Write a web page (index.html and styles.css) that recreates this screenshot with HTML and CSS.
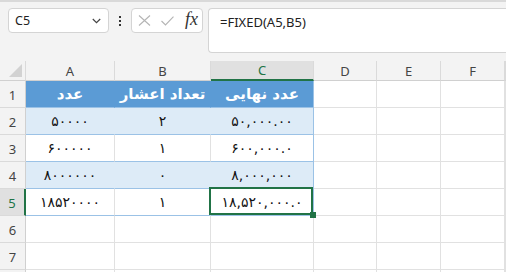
FILE: index.html
```html
<!DOCTYPE html>
<html lang="fa">
<head>
    <meta charset="UTF-8">
    <title>FIXED</title>
    <link rel="stylesheet" href="styles.css">
</head>
<body>
    <div class="topline"></div>
    <div class="toolbar">
        <div class="namebox">
            <span>C5</span>
            <svg class="chevron" width="9" height="6" viewBox="0 0 9 6"><path d="M0.8 1 L4.5 4.7 L8.2 1" fill="none" stroke="#444" stroke-width="1.2"/></svg>
        </div>
        <div class="dots"><i></i><i></i><i></i></div>
        <div class="fxbox">
            <svg width="13" height="11" viewBox="0 0 13 11"><path d="M1 0.5 L12 10.5 M12 0.5 L1 10.5" stroke="#b4b4b4" stroke-width="1.1" fill="none"/></svg>
            <svg width="13" height="10" viewBox="0 0 13 10"><path d="M0.5 5 L4.5 9 L12.5 0.7" stroke="#b4b4b4" stroke-width="1.1" fill="none"/></svg>
            <span class="fx">fx</span>
        </div>
        <div class="formula">=FIXED(A5,B5)</div>
    </div>

    <div class="gap"></div>

    <div class="sheet">
        <!-- column headers -->
        <div class="hd corner"><svg width="13" height="13" viewBox="0 0 13 13"><path d="M13 0 L13 13 L0 13 Z" fill="#d2d2d2"/></svg></div>
        <div class="hd">A</div>
        <div class="hd">B</div>
        <div class="hd sel-col">C</div>
        <div class="hd">D</div>
        <div class="hd">E</div>
        <div class="hd">F</div>
        <div class="hd"></div>

        <!-- row 1 -->
        <div class="rh">1</div>
        <div class="c th">عدد</div>
        <div class="c th">تعداد اعشار</div>
        <div class="c th last">عدد نهایی</div>
        <div class="c"></div><div class="c"></div><div class="c"></div><div class="c"></div>

        <!-- row 2 -->
        <div class="rh">2</div>
        <div class="c band">۵۰۰۰۰</div>
        <div class="c band">۲</div>
        <div class="c band last">۵۰,۰۰۰.۰۰</div>
        <div class="c"></div><div class="c"></div><div class="c"></div><div class="c"></div>

        <!-- row 3 -->
        <div class="rh">3</div>
        <div class="c plain">۶۰۰۰۰۰</div>
        <div class="c plain">۱</div>
        <div class="c plain last">۶۰۰,۰۰۰.۰</div>
        <div class="c"></div><div class="c"></div><div class="c"></div><div class="c"></div>

        <!-- row 4 -->
        <div class="rh">4</div>
        <div class="c band">۸۰۰۰۰۰۰</div>
        <div class="c band">۰</div>
        <div class="c band last">۸,۰۰۰,۰۰۰</div>
        <div class="c"></div><div class="c"></div><div class="c"></div><div class="c"></div>

        <!-- row 5 -->
        <div class="rh sel-row">5</div>
        <div class="c plain">۱۸۵۲۰۰۰۰</div>
        <div class="c plain">۱</div>
        <div class="c plain last active">۱۸,۵۲۰,۰۰۰.۰</div>
        <div class="c"></div><div class="c"></div><div class="c"></div><div class="c"></div>

        <!-- rows 6-8 -->
        <div class="rh">6</div>
        <div class="c"></div><div class="c"></div><div class="c"></div><div class="c"></div><div class="c"></div><div class="c"></div><div class="c"></div>
        <div class="rh">7</div>
        <div class="c"></div><div class="c"></div><div class="c"></div><div class="c"></div><div class="c"></div><div class="c"></div><div class="c"></div>
        <div class="rh"></div>
        <div class="c"></div><div class="c"></div><div class="c"></div><div class="c"></div><div class="c"></div><div class="c"></div><div class="c"></div>
    </div>
</body>
</html>
```

FILE: styles.css
```css
body {
    margin: 0;
    background-color: #f3f3f3;
    font-family: "Noto Sans", "Open Sans", sans-serif;
    overflow: hidden;
    width: 506px;
    height: 272px;
}

.topline {
    height: 2px;
    background-color: #d9d9d9;
}

.toolbar {
    display: flex;
    align-items: flex-start;
    padding: 6px 0 0 8px;
    height: 45px;
}

.namebox,
.fxbox,
.formula {
    box-sizing: border-box;
    background-color: white;
    border: 1px solid #d4d4d4;
    border-radius: 4px;
}

.namebox {
    display: flex;
    align-items: center;
    justify-content: space-between;
    width: 101px;
    height: 25px;
    padding: 0 7px 0 6px;
    font-size: 12.5px;
    color: #222;
}

.dots {
    width: 22px;
    height: 25px;
    display: flex;
    flex-direction: column;
    align-items: center;
    justify-content: center;
    gap: 2px;
}

.dots i {
    display: block;
    width: 2px;
    height: 2px;
    background-color: #333;
}

.fxbox {
    display: flex;
    align-items: center;
    width: 72px;
    height: 25px;
    padding-left: 6px;
    gap: 10px;
}

.fx {
    font-family: "Liberation Serif", serif;
    font-style: italic;
    font-size: 18px;
    color: #333;
    margin-left: 1px;
    margin-top: -2px;
}

.formula {
    flex: 1;
    height: 45px;
    margin-left: 5px;
    border-right: none;
    border-radius: 4px 0 0 4px;
    padding: 4px 0 0 11px;
    font-size: 13px;
    color: #222;
}

.gap {
    height: 8px;
}

.sheet {
    display: grid;
    grid-template-columns: 26px 89px 96px 103px 63px 64px 64px 1fr;
    grid-template-rows: 20px repeat(7, 27px) 3px;
    background-color: white;
    width: 506px;
}

.sheet > div {
    box-sizing: border-box;
    display: flex;
    align-items: center;
    justify-content: center;
    min-width: 0;
}

.hd {
    background-color: #f3f3f3;
    border-right: 1px solid #dadada;
    border-bottom: 1px solid #d0d0d0;
    font-size: 13px;
    color: #444;
}

.hd.corner {
    justify-content: flex-end;
    align-items: flex-end;
    padding: 0 3px 3px 0;
}

.sel-col {
    background-color: #e0e0e0;
    color: #217346;
    border-bottom: 2px solid #217346;
}

.rh {
    background-color: #f3f3f3;
    border-right: 1px solid #d0d0d0;
    border-bottom: 1px solid #dadada;
    font-size: 13px;
    color: #444;
    padding-top: 2px;
}

.sel-row {
    background-color: #e0e0e0;
    color: #217346;
    border-right: 2px solid #217346;
}

.c {
    border-right: 1px solid #e1e1e1;
    border-bottom: 1px solid #e1e1e1;
    font-family: "DejaVu Sans", sans-serif;
    font-size: 14px;
    color: #111;
    direction: ltr;
}

.th {
    background-color: #5b9bd5;
    border-right-color: #5b9bd5;
    border-bottom-color: #9bc2e6;
    color: white;
    font-weight: bold;
    font-size: 15px;
}

.band {
    background-color: #ddebf7;
    border-right-color: #ddebf7;
    border-bottom-color: #9bc2e6;
}

.plain {
    border-bottom-color: #9bc2e6;
}

.last {
    border-right-color: #9bc2e6;
}

.active {
    position: relative;
}

.active::before {
    content: "";
    position: absolute;
    top: -2px;
    left: -2px;
    right: 0;
    bottom: 0;
    border: 2px solid #217346;
}

.active::after {
    content: "";
    position: absolute;
    right: -3px;
    bottom: -3px;
    width: 6px;
    height: 6px;
    background-color: #217346;
}
```
